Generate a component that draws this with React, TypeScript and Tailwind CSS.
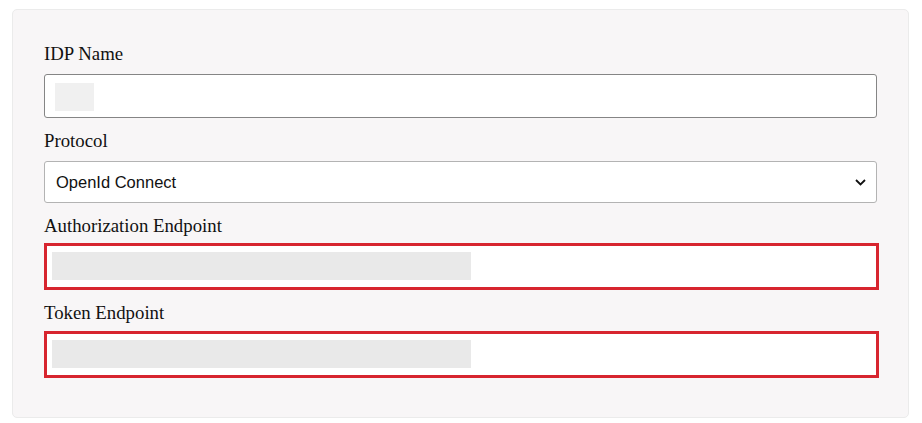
import React from "react";

const serif = { fontFamily: '"Liberation Serif", "Times New Roman", serif' };
const sans = { fontFamily: '"Liberation Sans", Arial, sans-serif' };

function Label({ children, className = "" }: { children: React.ReactNode; className?: string }) {
  return (
    <div className={`h-[24px] leading-[24px] text-[18.8px] text-[#111111] whitespace-nowrap ${className}`} style={serif}>
      {children}
    </div>
  );
}

function RedField({ className = "" }: { className?: string }) {
  return (
    <div className={`h-[47px] w-full border-[3px] border-[#d7252f] bg-white pl-[5px] pt-[6px] ${className}`}>
      <div className="h-[28px] w-[419px] bg-[#e9e9e9]" />
    </div>
  );
}

export default function App() {
  return (
    <div className="min-h-[423px] w-[922px] bg-white pt-[9px] pl-[12px]">
      <div className="h-[409px] w-[897px] rounded-[5px] border border-[#ebebeb] bg-[#f8f6f7] pl-[31px] pr-[29px] pt-[32px]">
        <Label>IDP Name</Label>
        <div className="mt-[8px] h-[44px] w-[833px] rounded-[3px] border border-[#858585] bg-white pl-[10px] pt-[8px]">
          <div className="h-[28px] w-[39px] bg-[#f0f0f0]" />
        </div>

        <Label className="mt-[11px]">Protocol</Label>
        <div className="mt-[8px] flex h-[42px] w-[833px] items-center justify-between rounded-[3px] border border-[#b3b3b3] bg-white pl-[11px] pr-[10px]">
          <span className="text-[16.5px] text-[#111111]" style={sans}>OpenId Connect</span>
          <svg width="11" height="7" viewBox="0 0 11 7" fill="none">
            <path d="M1 1l4.5 4.5L10 1" stroke="#111111" strokeWidth="1.8" />
          </svg>
        </div>

        <Label className="mt-[11px]">Authorization Endpoint</Label>
        <RedField className="mt-[5px]" />

        <Label className="mt-[11px]">Token Endpoint</Label>
        <RedField className="mt-[6px]" />
      </div>
    </div>
  );
}
